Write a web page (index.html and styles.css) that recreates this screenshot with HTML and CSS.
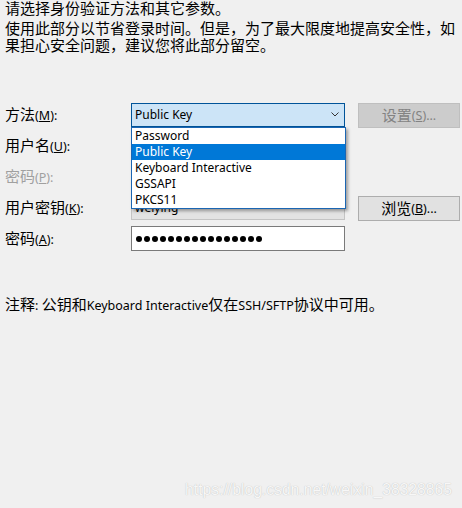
FILE: index.html
```html
<!DOCTYPE html>
<html lang="zh-CN">
<head>
<meta charset="utf-8">
<title>身份验证</title>
<link rel="stylesheet" href="styles.css">
</head>
<body>
<div class="page">
  <p class="intro">请选择身份验证方法和其它参数。</p>
  <p class="desc">使用此部分以节省登录时间。但是，为了最大限度地提高安全性，如果担心安全问题，建议您将此部分留空。</p>

  <div class="form">
    <div class="label">方法<span class="lat">(<u>M</u>):</span></div>
    <div class="field-wrap">
      <div class="combo combo-active">
        <span class="combo-text">Public Key</span>
        <svg class="chev" width="8" height="5" viewBox="0 0 8 5"><polyline points="0.5,0.5 4,4 7.5,0.5" fill="none" stroke="#333" stroke-width="1"/></svg>
      </div>
      <ul class="dropdown">
        <li>Password</li>
        <li class="sel">Public Key</li>
        <li>Keyboard Interactive</li>
        <li>GSSAPI</li>
        <li>PKCS11</li>
      </ul>
    </div>
    <div class="btn btn-disabled">设置<span class="lat">(<u>S</u>)...</span></div>

    <div class="label">用户名<span class="lat">(<u>U</u>):</span></div>
    <div class="input"></div>
    <div></div>

    <div class="label label-disabled">密码<span class="lat">(<u>P</u>):</span></div>
    <div class="input input-disabled"></div>
    <div></div>

    <div class="label">用户密钥<span class="lat">(<u>K</u>):</span></div>
    <div class="combo combo-gray">
      <span class="combo-text">weiying</span>
      <svg class="chev" width="8" height="5" viewBox="0 0 8 5"><polyline points="0.5,0.5 4,4 7.5,0.5" fill="none" stroke="#333" stroke-width="1"/></svg>
    </div>
    <div class="btn">浏览<span class="lat">(<u>B</u>)...</span></div>

    <div class="label">密码<span class="lat">(<u>A</u>):</span></div>
    <div class="input pw">
      <span class="dot"></span><span class="dot"></span><span class="dot"></span><span class="dot"></span>
      <span class="dot"></span><span class="dot"></span><span class="dot"></span><span class="dot"></span>
      <span class="dot"></span><span class="dot"></span><span class="dot"></span><span class="dot"></span>
      <span class="dot"></span><span class="dot"></span><span class="dot"></span><span class="dot"></span>
    </div>
    <div></div>
  </div>

  <p class="note">注释<span class="lat">: </span>公钥和<span class="lat">Keyboard Interactive</span>仅在<span class="lat">SSH/SFTP</span>协议中可用。</p>
</div>
<div class="watermark">https://blog.csdn.net/weixin_38328865</div>
</body>
</html>
```
FILE: styles.css
```css
html, body {
  margin: 0;
  padding: 0;
}
body {
  background: #f0f0f0;
  width: 462px;
  height: 508px;
  position: relative;
  overflow: hidden;
  font-family: "Noto Sans", "Noto Sans CJK SC", sans-serif;
  font-size: 15px;
  line-height: 17px;
  color: #000;
}
.page {
  padding: 0 0 0 5px;
}
p {
  margin: 0;
}
.intro {
  margin-top: 0;
}
.desc {
  margin-top: 3px;
  width: 452px;
}
.lat {
  font-family: "Noto Sans", sans-serif;
  font-size: 12.5px;
  line-height: 17px;
}
u {
  text-decoration: underline;
  text-underline-offset: 1px;
}
.form {
  margin-top: 45px;
  display: grid;
  grid-template-columns: 126px 214px 115px;
  grid-template-rows: repeat(5, 31px);
  align-items: center;
}
.label {
  white-space: nowrap;
}
.label-disabled {
  color: #a0a0a0;
}
.field-wrap {
  position: relative;
  height: 24px;
}
.combo {
  box-sizing: border-box;
  height: 24px;
  width: 214px;
  border: 1px solid #adadad;
  background: #e5e5e5;
  display: flex;
  align-items: center;
  justify-content: space-between;
  padding: 0 5px 0 3px;
  font-family: "Noto Sans", sans-serif;
  font-size: 12px;
}
.combo-active {
  background: #cce4f7;
  border-color: #005499;
}
.combo-gray {
  background: #e3e3e3;
  border-color: #c4c4c4;
}
.chev {
  display: block;
}
.dropdown {
  position: absolute;
  z-index: 10;
  left: 0;
  top: 24px;
  width: 215px;
  box-sizing: border-box;
  margin: 0;
  padding: 0;
  list-style: none;
  background: #fff;
  border: 1px solid #1b66b3;
  box-shadow: 2px 2px 3px rgba(0, 0, 0, 0.35);
  font-family: "Noto Sans", sans-serif;
  font-size: 12px;
}
.dropdown li {
  height: 16px;
  line-height: 16px;
  padding-left: 3px;
  white-space: nowrap;
}
.dropdown li.sel {
  background: #0078d7;
  color: #fff;
}
.input {
  box-sizing: border-box;
  height: 25px;
  width: 214px;
  border: 1px solid #7a7a7a;
  background: #fff;
}
.input-disabled {
  background: #f0f0f0;
  border-color: #cccccc;
}
.pw {
  display: flex;
  align-items: center;
  gap: 2px;
  padding-left: 4px;
}
.dot {
  width: 6px;
  height: 6px;
  border-radius: 50%;
  background: #000;
}
.btn {
  justify-self: end;
  align-self: center;
  margin-top: 2px;
  box-sizing: border-box;
  width: 102px;
  height: 25px;
  border: 1px solid #adadad;
  background: #e1e1e1;
  display: flex;
  align-items: center;
  justify-content: center;
  white-space: nowrap;
}
.btn-disabled {
  background: #cccccc;
  border-color: #bfbfbf;
  color: #838383;
}
.note {
  margin-top: 42px;
}
.watermark {
  position: absolute;
  right: 10px;
  bottom: 9px;
  font-family: "Liberation Sans", Arial, sans-serif;
  font-size: 15.7px;
  line-height: 18px;
  color: #f7f7f7;
  text-shadow: 0 0 1px rgba(0, 0, 0, 0.25);
  white-space: nowrap;
}
```
